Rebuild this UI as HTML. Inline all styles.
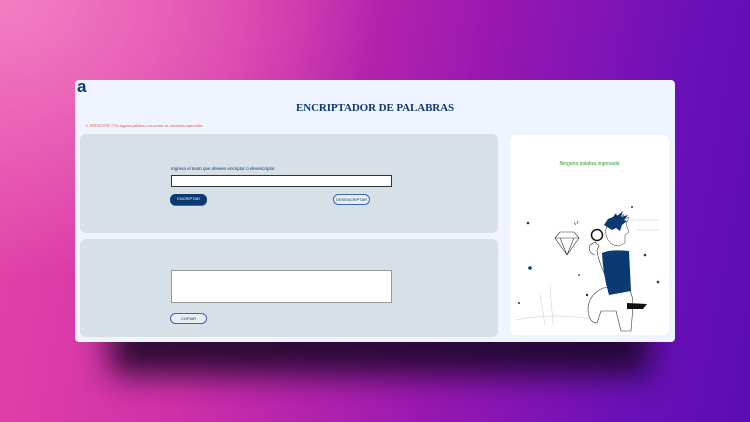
<!DOCTYPE html>
<html><head><meta charset="utf-8"><style>
*{margin:0;padding:0;box-sizing:border-box}
body{width:750px;height:422px;overflow:hidden;position:relative;font-family:"Liberation Sans",sans-serif;
background:radial-gradient(ellipse 380px 280px at 0% 0%,#f27ec2 0%,rgba(240,100,190,0) 100%),linear-gradient(100deg,#e445a8 0%,#d030a8 30%,#9a18b0 60%,#6a10b8 85%,#5a0cb0 100%);}
.shadow{position:absolute;left:110px;top:315px;width:540px;height:60px;background:#1a0628;filter:blur(16px);opacity:.9}
.card{position:absolute;left:75px;top:80px;width:600px;height:262px;background:#f0f4fe;border-radius:4px}
.logo{position:absolute;left:2px;top:-3px;font-size:17px;font-weight:bold;color:#0b3a72}
h1{position:absolute;left:0;width:600px;top:22px;text-align:center;font-family:"Liberation Serif",serif;font-size:11px;font-weight:900;color:#0b3a72;letter-spacing:-.1px}
.warn{position:absolute;left:10px;top:43px;font-family:"Liberation Serif",serif;font-size:4px;color:#e8524a}
.p{position:absolute;left:5px;width:418px;background:#d6e0e6;border-radius:6px}
.p1{top:54px;height:99px}.p2{top:159px;height:98px}
.lbl{position:absolute;left:91px;top:32px;font-size:4.5px;font-style:italic;color:#0b3a72}
.in{position:absolute;left:91px;top:41px;width:221px;height:12px;background:#fff;border:1px solid #333}
.ta{position:absolute;left:91px;top:31px;width:221px;height:33px;background:#fff;border:1px solid #999}
.b{position:absolute;height:11px;border-radius:6px;font-size:4px;text-align:center;line-height:10px}
.b1{left:90px;top:60px;width:37px;background:#0b3a72;color:#fff;box-shadow:0 1px 0 #3a6aa8}
.b2{left:253px;top:60px;width:37px;border:1px solid #3a6aa8;color:#0b3a72;background:#e8eef4}
.b3{left:90px;top:74px;width:37px;border:1px solid #3a6aa8;color:#0b3a72;background:#e8eef4}
.r{position:absolute;left:435px;top:55px;width:159px;height:200px;background:#fff;border-radius:6px}
.none{position:absolute;left:0;width:159px;top:26px;text-align:center;font-size:5px;color:#2a9a2a}
</style></head><body>
<div class="shadow"></div>
<div class="card">
<div class="logo">a</div>
<h1>ENCRIPTADOR DE PALABRAS</h1>
<div class="warn">⚠ ATENCION !! No ingrese palabras con acento ni caracteres especiales.</div>
<div class="p p1"><div class="lbl">Ingresa el texto que desees encriptar o desencriptar</div><div class="in"></div>
<div class="b b1">ENCRIPTAR</div><div class="b b2">DESENCRIPTAR</div></div>
<div class="p p2"><div class="ta"></div><div class="b b3">COPIAR</div></div>
<div class="r"><div class="none">Ninguna palabra ingresada</div>
<svg width="159" height="200" style="position:absolute;left:0;top:0">
<g fill="#0b3a72"><circle cx="18" cy="88" r="1.3"/><circle cx="20" cy="133" r="1.8"/><circle cx="9" cy="168" r="1"/><circle cx="122" cy="72" r="1"/><circle cx="135" cy="120" r="1.3"/><circle cx="148" cy="147" r="1.3"/><circle cx="69" cy="140" r=".9"/><circle cx="77" cy="160" r="1.2"/></g>
<g fill="none" stroke="#ccc" stroke-width=".5"><path d="M5 185q40-8 80 0M30 160l5 30M40 150l3 40M120 85h30M125 95h25"/></g>
<g fill="none" stroke="#333" stroke-width=".6"><path d="M45 103h24l-12 17z M45 103l5-6h14l5 6 M50 103l7 17 7-17"/><path d="M64 87l2 3M68 86l-1 3"/>
<path d="M85 120q-8-3-5-10l5-3 4 4-2 4q1 10 8 25"/><path d="M78 175q0-15 15-22l20-2q10 2 10 20l-2 25-10 0-5-20-15 0-4 12q-8 0-9-13z" fill="#fff"/></g>
<path d="M92 118q8-4 27-2l2 40-22 4q-6-20-7-42z" fill="#0b3a72"/>
<path d="M96 100q-2-10 6-13l6-7 1 4 5-5-1 6 6-3-3 7 3 8-4 3v8l-6 3q-10 0-13-11z" fill="#fff" stroke="#333" stroke-width=".5"/>
<path d="M94 90l4-6 5-2 3-4 1 3 6-5-2 6 7-2-4 5 3 1-5 4-2 6-4-3-4 2z" fill="#0b3a72"/>
<path d="M117 168l20 1-4 5-16 0z" fill="#111"/>
<circle cx="87" cy="100" r="5.5" fill="none" stroke="#111" stroke-width="1.5"/>
</svg></div>
</div>
</body></html>
